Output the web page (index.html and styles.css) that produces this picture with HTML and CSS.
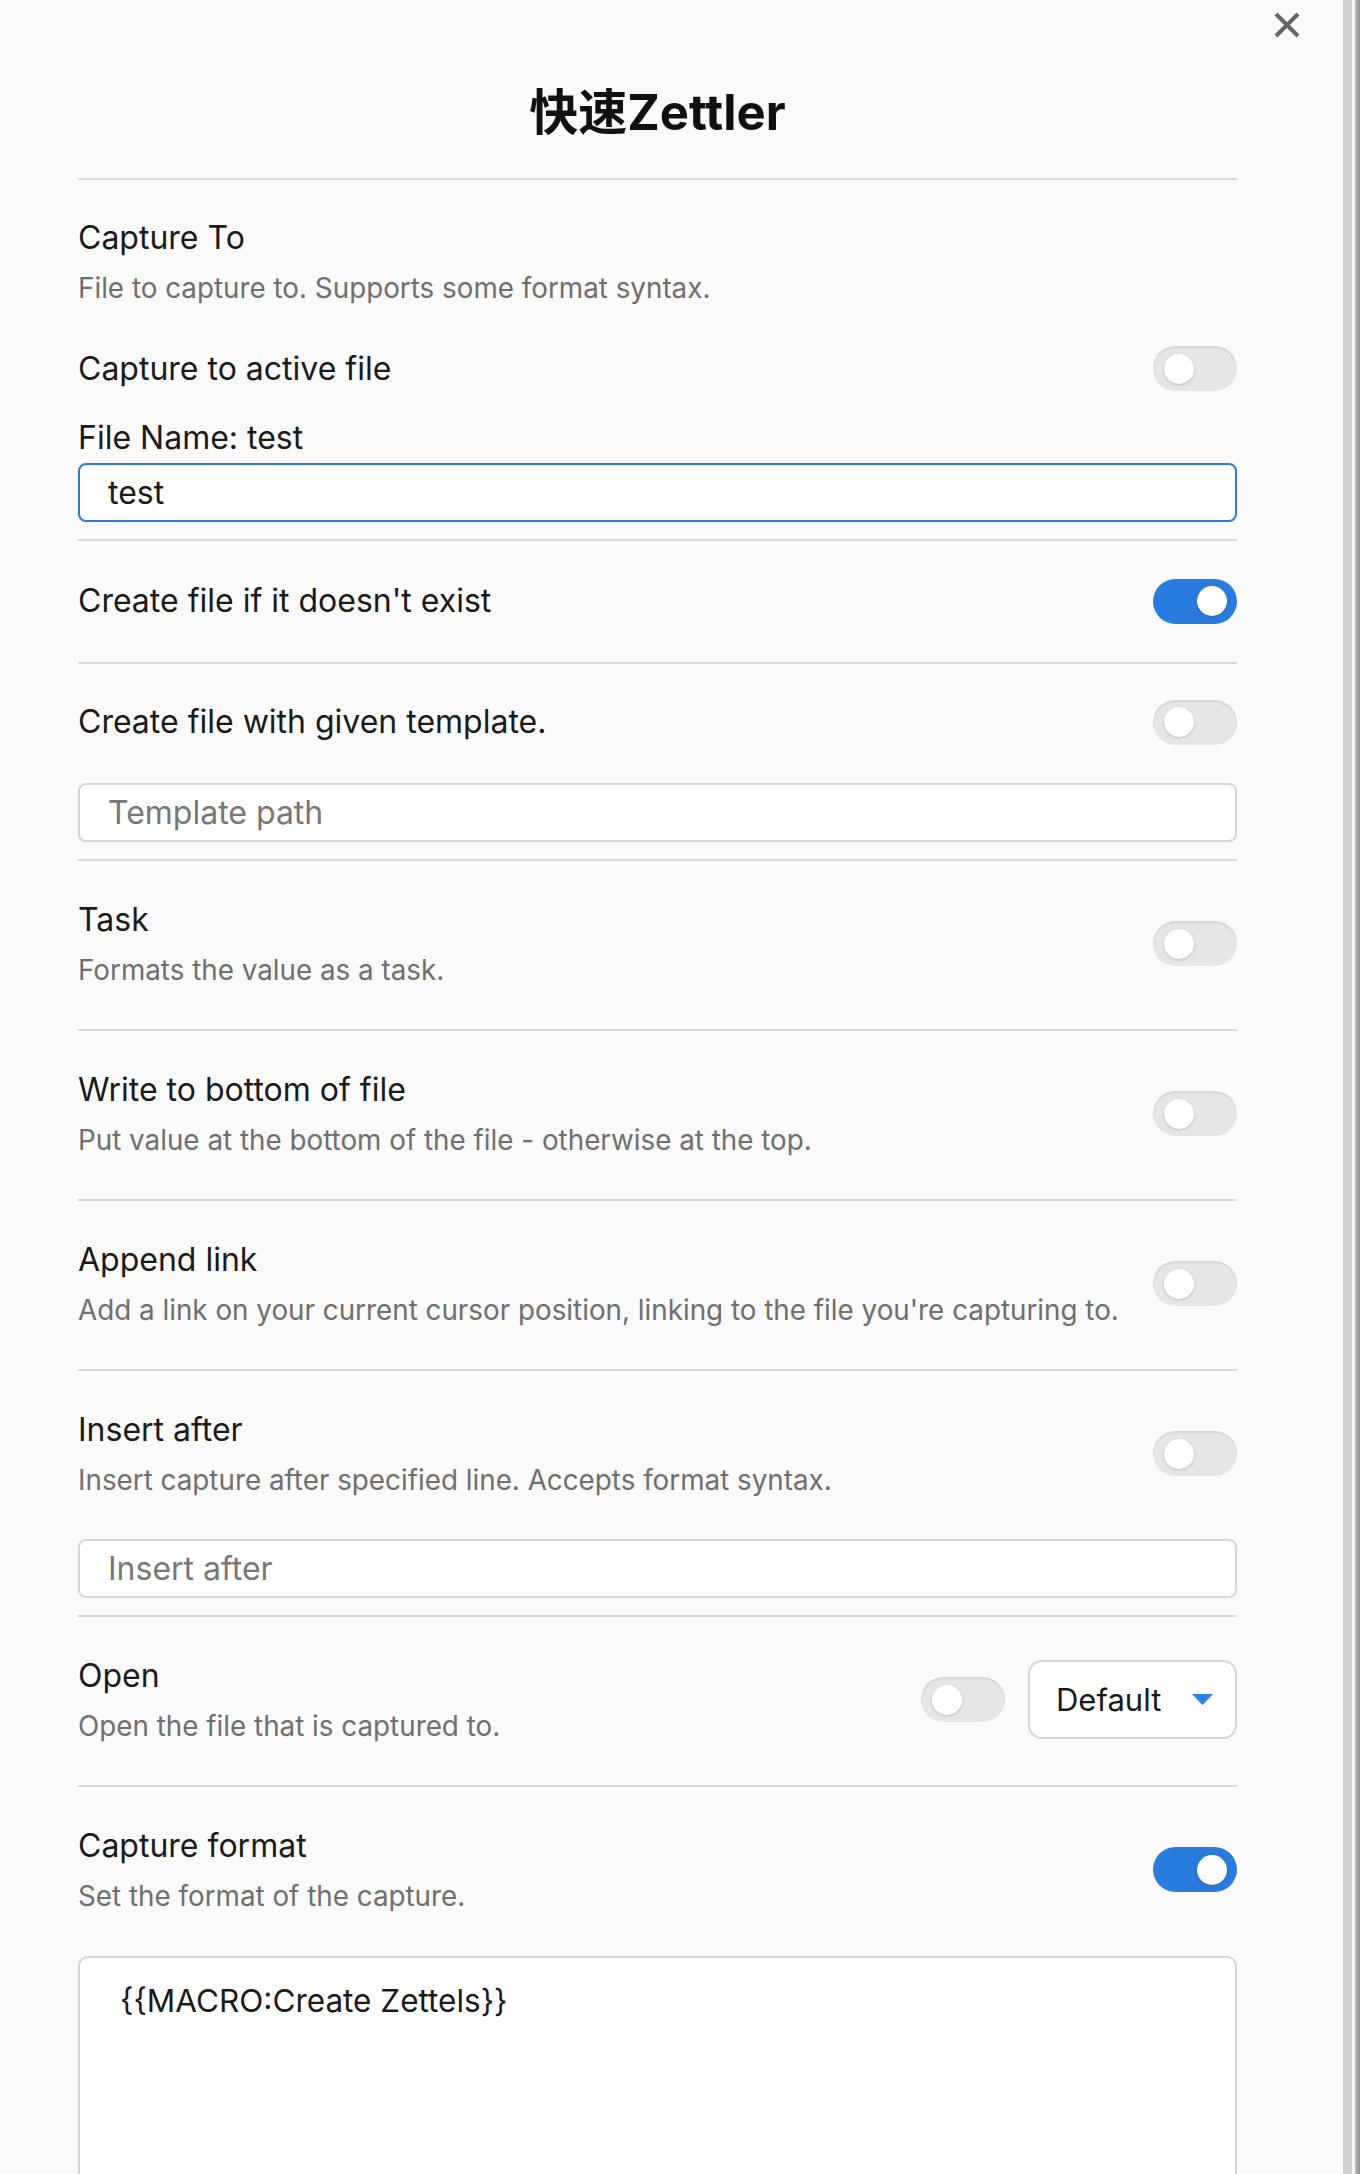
FILE: index.html
```html
<!DOCTYPE html>
<html lang="zh">
<head>
<meta charset="utf-8">
<title>快速Zettler</title>
<link rel="stylesheet" href="styles.css">
</head>
<body>
<div class="frame">
  <div class="modal">
    <svg class="close" viewBox="0 0 28 28" aria-label="Close">
      <path d="M3 3 L25 25 M25 3 L3 25" stroke="#666" stroke-width="4" fill="none"/>
    </svg>
    <h1 class="title">快速Zettler</h1>

    <div class="section first">
      <div class="info">
        <div class="name">Capture To</div>
        <div class="desc">File to capture to. Supports some format syntax.</div>
      </div>
      <div class="row toggle-row">
        <div class="name">Capture to active file</div>
        <div class="toggle"><span class="knob"></span></div>
      </div>
      <div class="name field-label">File Name: test</div>
      <div class="input focused">test</div>
    </div>

    <div class="section single">
      <div class="row">
        <div class="name">Create file if it doesn't exist</div>
        <div class="toggle on"><span class="knob"></span></div>
      </div>
    </div>

    <div class="section with-input">
      <div class="row">
        <div class="name">Create file with given template.</div>
        <div class="toggle"><span class="knob"></span></div>
      </div>
      <div class="input placeholder">Template path</div>
    </div>

    <div class="section">
      <div class="row">
        <div class="info">
          <div class="name">Task</div>
          <div class="desc">Formats the value as a task.</div>
        </div>
        <div class="toggle"><span class="knob"></span></div>
      </div>
    </div>

    <div class="section">
      <div class="row">
        <div class="info">
          <div class="name">Write to bottom of file</div>
          <div class="desc">Put value at the bottom of the file - otherwise at the top.</div>
        </div>
        <div class="toggle"><span class="knob"></span></div>
      </div>
    </div>

    <div class="section">
      <div class="row">
        <div class="info">
          <div class="name">Append link</div>
          <div class="desc">Add a link on your current cursor position, linking to the file you're capturing to.</div>
        </div>
        <div class="toggle"><span class="knob"></span></div>
      </div>
    </div>

    <div class="section with-input desc-input">
      <div class="row">
        <div class="info">
          <div class="name">Insert after</div>
          <div class="desc">Insert capture after specified line. Accepts format syntax.</div>
        </div>
        <div class="toggle"><span class="knob"></span></div>
      </div>
      <div class="input placeholder">Insert after</div>
    </div>

    <div class="section">
      <div class="row">
        <div class="info">
          <div class="name">Open</div>
          <div class="desc">Open the file that is captured to.</div>
        </div>
        <div class="controls">
          <div class="toggle"><span class="knob"></span></div>
          <div class="dropdown">
            <span>Default</span>
            <svg class="caret" viewBox="0 0 21 11"><path d="M0 0 H21 L10.5 11 Z" fill="#2a80e8"/></svg>
          </div>
        </div>
      </div>
    </div>

    <div class="section last">
      <div class="row">
        <div class="info">
          <div class="name">Capture format</div>
          <div class="desc">Set the format of the capture.</div>
        </div>
        <div class="toggle on"><span class="knob"></span></div>
      </div>
      <div class="textarea">{{MACRO:Create Zettels}}</div>
    </div>
  </div>
  <div class="edge-a"></div>
  <div class="edge-b"></div>
  <div class="edge-c"></div>
</div>
</body>
</html>
```

FILE: styles.css
```css
* { box-sizing: border-box; }
html, body { margin: 0; padding: 0; }
body {
  background: #fafafa;
  font-family: Inter, "Noto Sans CJK SC", "Noto Sans", sans-serif;
  color: #1a1a1a;
}
.frame {
  display: flex;
  height: 2174px;
  overflow: hidden;
}
.modal {
  flex: 1;
  position: relative;
  padding: 0 106px 0 78px;
  background: #fafafa;
}
.edge-a { width: 9px; background: #d0d0d0; }
.edge-b { width: 3px; background: #f6f6f6; }
.edge-c { width: 5px; background: linear-gradient(to right, #bdbdbd, #8c8c8c); }

.close {
  position: absolute;
  top: 11px;
  right: 42px;
  width: 28px;
  height: 28px;
}
.title {
  margin: 0;
  padding: 86px 0 39px;
  text-align: center;
  font-size: 49px;
  line-height: 53px;
  font-weight: 700;
  color: #111;
}

.section {
  border-top: 2px solid #d8d8d8;
  padding: 36px 0 39px;
}
.section.first { padding: 35px 0 17px; }
.section.single { padding: 37px 0 38px; }
.section.with-input { padding: 35px 0 17px; }
.section.desc-input { padding: 36px 0 17px; }
.section.last { padding: 36px 0 0; }

.name {
  font-size: 32px;
  line-height: 46px;
  color: #1a1a1a;
}
.desc {
  font-size: 27.8px;
  line-height: 40px;
  margin-top: 7px;
  color: #6f6f6f;
}
.first .info { margin-bottom: 38px; }

.row {
  display: flex;
  align-items: center;
  justify-content: space-between;
}
.toggle-row { height: 45px; }
.field-label { margin-top: 24px; }

.toggle {
  flex: none;
  width: 84px;
  height: 45px;
  border-radius: 23px;
  background: #e6e6e6;
  box-shadow: inset 0 2px 2px rgba(0,0,0,0.08);
  display: flex;
  align-items: center;
  padding: 0 11px;
}
.toggle .knob {
  width: 30px;
  height: 30px;
  border-radius: 50%;
  background: #fff;
  box-shadow: 0 1px 3px rgba(0,0,0,0.18);
}
.toggle.on {
  background: #2a7bde;
  box-shadow: none;
  justify-content: flex-end;
  padding: 0 10px;
}

.input {
  height: 59px;
  border: 2px solid #d6d6d6;
  border-radius: 8px;
  background: #fff;
  padding: 0 28px;
  font-size: 32px;
  line-height: 55px;
  color: #1a1a1a;
}
.first .input { margin-top: 2px; }
.with-input .input { margin-top: 38px; }
.desc-input .input { margin-top: 39px; }
.input.focused { border-color: #2a7bde; }
.input.placeholder { color: #777; }

.controls {
  display: flex;
  align-items: center;
  gap: 23px;
}
.dropdown {
  width: 209px;
  height: 79px;
  border: 2px solid #d6d6d6;
  border-radius: 14px;
  background: #fff;
  display: flex;
  align-items: center;
  justify-content: space-between;
  padding: 0 22px 0 26px;
  font-size: 31px;
}
.caret { width: 21px; height: 11px; }

.textarea {
  margin-top: 40px;
  height: 320px;
  border: 2px solid #d6d6d6;
  border-radius: 10px;
  background: #fff;
  padding: 20px 40px;
  font-size: 31.5px;
  line-height: 46px;
  color: #1a1a1a;
}
```
